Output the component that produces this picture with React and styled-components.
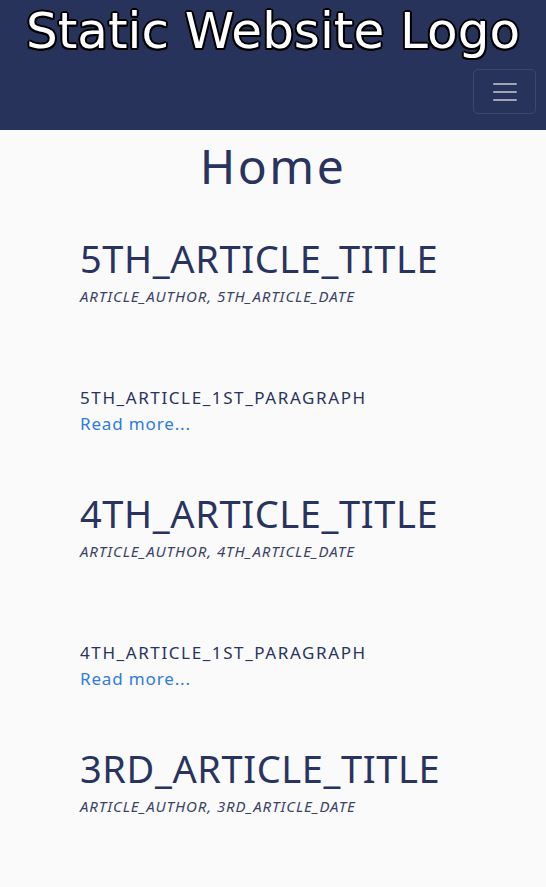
import React from "react";
import styled, { createGlobalStyle } from "styled-components";

const articles = [
  { n: "5TH", date: "5TH_ARTICLE_DATE" },
  { n: "4TH", date: "4TH_ARTICLE_DATE" },
  { n: "3RD", date: "3RD_ARTICLE_DATE" },
];

export default function App() {
  return (
    <>
      <GlobalStyle />
      <Header>
        <Logo>Static Website Logo</Logo>
        <NavRow>
          <Toggler aria-label="Toggle navigation">
            <TogglerIcon viewBox="0 0 30 30">
              <path
                d="M4 7h22M4 15h22M4 23h22"
                stroke="rgba(255,255,255,0.55)"
                strokeWidth="2"
                strokeLinecap="round"
              />
            </TogglerIcon>
          </Toggler>
        </NavRow>
      </Header>
      <Main>
        <PageTitle>Home</PageTitle>
        <ArticleList>
          {articles.map((a) => (
            <Article key={a.n}>
              <Title>{a.n}_ARTICLE_TITLE</Title>
              <Meta>ARTICLE_AUTHOR, {a.date}</Meta>
              <Paragraph>{a.n}_ARTICLE_1ST_PARAGRAPH</Paragraph>
              <ReadMore href="#">Read more...</ReadMore>
            </Article>
          ))}
        </ArticleList>
      </Main>
    </>
  );
}

const GlobalStyle = createGlobalStyle`
  body {
    margin: 0;
    background: #fafafa;
    color: #283360;
    font-family: "Noto Sans", "DejaVu Sans", sans-serif;
  }
  #root {
    height: 887px;
    overflow: hidden;
  }
`;

const Header = styled.header`
  background: #28335c;
  height: 130px;
  display: flex;
  flex-direction: column;
`;

const Logo = styled.div`
  font-family: "DejaVu Sans", sans-serif;
  font-size: 50px;
  line-height: 62px;
  color: #fff;
  text-align: center;
  text-shadow: -1.5px -1.5px 0 #000, 1.5px -1.5px 0 #000, -1.5px 1.5px 0 #000,
    1.5px 1.5px 0 #000, 0 2px 0 #000, 2px 0 0 #000, -2px 0 0 #000, 0 -2px 0 #000;
`;

const NavRow = styled.div`
  display: flex;
  justify-content: flex-end;
  padding: 7px 10px 0 0;
`;

const Toggler = styled.button`
  width: 63px;
  height: 45px;
  background: transparent;
  border: 1px solid rgba(255, 255, 255, 0.1);
  border-radius: 5px;
  display: flex;
  align-items: center;
  justify-content: center;
  padding: 0;
`;

const TogglerIcon = styled.svg`
  width: 30px;
  height: 30px;
`;

const Main = styled.main`
  padding: 0 0 40px;
`;

const PageTitle = styled.h1`
  margin: 8px 0 0;
  font-size: 48px;
  font-weight: 400;
  line-height: 56px;
  text-align: center;
  letter-spacing: 2.5px;
`;

const ArticleList = styled.div`
  padding: 41px 0 0 80px;
  display: flex;
  flex-direction: column;
  gap: 53px;
`;

const Article = styled.article`
  display: flex;
  flex-direction: column;
`;

const Title = styled.h2`
  margin: 0;
  font-size: 38px;
  font-weight: 400;
  line-height: 46px;
  letter-spacing: 0.6px;
`;

const Meta = styled.div`
  margin-top: 5px;
  font-size: 15px;
  font-style: italic;
  letter-spacing: 0.9px;
  line-height: 20px;
  color: #3a4266;
`;

const Paragraph = styled.p`
  margin: 78px 0 0;
  font-size: 17px;
  line-height: 27px;
  letter-spacing: 1.6px;
`;

const ReadMore = styled.a`
  font-size: 17px;
  line-height: 26px;
  color: #2f7be0;
  text-decoration: none;
  letter-spacing: 0.85px;
`;
